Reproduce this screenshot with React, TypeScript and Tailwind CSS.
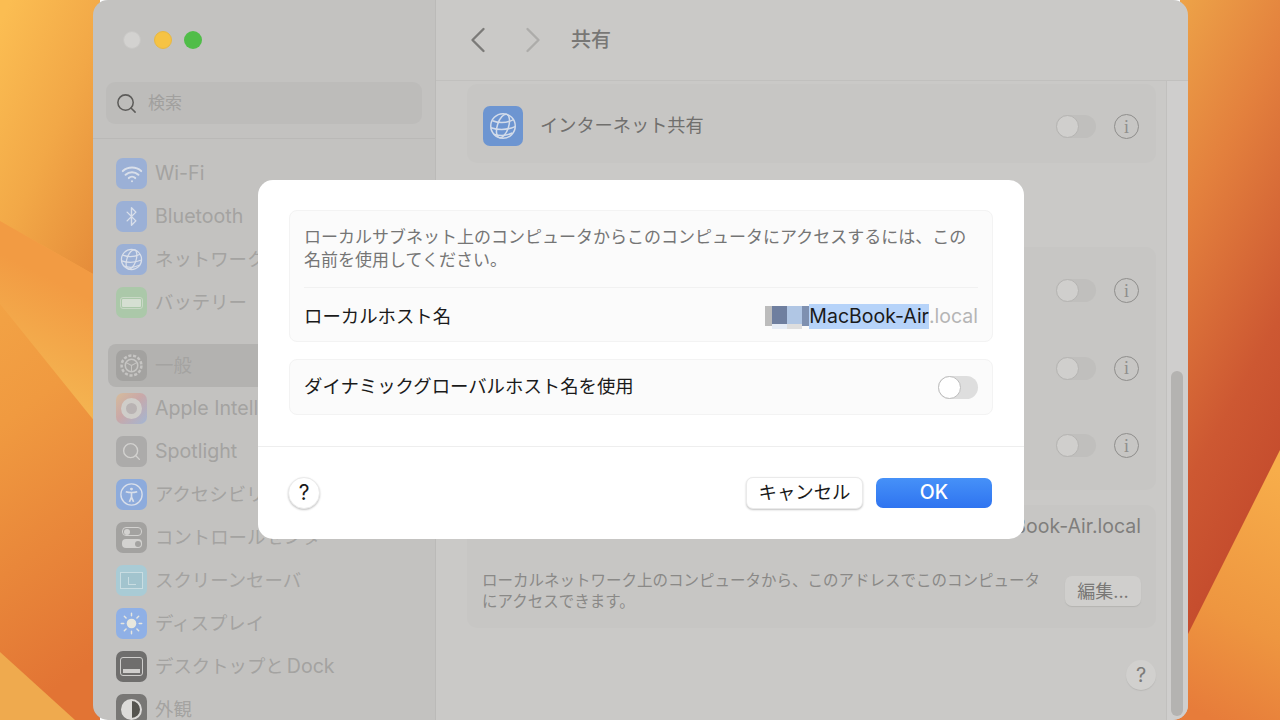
import { Search, Wifi, Bluetooth, ChevronLeft, ChevronRight } from "lucide-react";
import type { ReactNode } from "react";

function Wallpaper() {
  return (
    <svg className="absolute inset-0" width="1280" height="720" viewBox="0 0 1280 720" aria-hidden>
      <defs>
        <linearGradient id="wl" x1="0.1" y1="0" x2="0.9" y2="1">
          <stop offset="0" stopColor="#fbbd52" />
          <stop offset="0.5" stopColor="#f2a847" />
          <stop offset="1" stopColor="#e58c3a" />
        </linearGradient>
        <linearGradient id="below" x1="0" y1="0" x2="0.15" y2="1">
          <stop offset="0" stopColor="#f4a848" />
          <stop offset="0.4" stopColor="#f09a40" />
          <stop offset="1" stopColor="#e27434" />
        </linearGradient>
        <linearGradient id="wedge" gradientUnits="userSpaceOnUse" x1="93" y1="300" x2="45" y2="395">
          <stop offset="0" stopColor="#f29b43" />
          <stop offset="1" stopColor="#f4b451" />
        </linearGradient>
        <linearGradient id="wr" x1="0" y1="0" x2="0.25" y2="1">
          <stop offset="0" stopColor="#eda348" />
          <stop offset="0.3" stopColor="#e3803d" />
          <stop offset="0.65" stopColor="#cd5832" />
          <stop offset="1" stopColor="#bf442a" />
        </linearGradient>
        <linearGradient id="wr2" x1="0.6" y1="0" x2="0.4" y2="1">
          <stop offset="0" stopColor="#f7ad4a" />
          <stop offset="0.6" stopColor="#ee9640" />
          <stop offset="1" stopColor="#e77c3a" />
        </linearGradient>
      </defs>
      <rect width="100" height="280" fill="url(#wl)" />
      <polygon points="0,221 100,278 100,720 0,720" fill="url(#below)" />
      <polygon points="0,221 100,278 100,428 0,304" fill="url(#wedge)" />
      <polygon points="0,652 75,720 0,720" fill="#efaa4e" />
      <rect x="1180" width="100" height="720" fill="url(#wr)" />
      <polygon points="1280,450 1280,720 1170,720 1170,670" fill="url(#wr2)" />
    </svg>
  );
}

function Tile({ bg, children, size = "w-[31px] h-[31px]" }: { bg: string; children?: ReactNode; size?: string }) {
  return (
    <div className={`${size} ${bg} shrink-0 rounded-[7px] flex items-center justify-center`}>{children}</div>
  );
}

function GlobeGlyph({ size, stroke }: { size: number; stroke: string }) {
  return (
    <svg width={size} height={size} viewBox="0 0 24 24" fill="none" stroke={stroke} strokeWidth="1.3">
      <circle cx="12" cy="12" r="10.5" />
      <ellipse cx="12" cy="12" rx="4.8" ry="10.5" transform="rotate(18 12 12)" />
      <path d="M3 7.5c5 2 12 2 18-1M1.6 13.5c6 2 14 2 20.8-1M4 19c5 1.5 11 1.5 16-1" />
    </svg>
  );
}

const navTop = [
  {
    label: <span className="text-[19.6px]">Wi-Fi</span>,
    icon: (
      <Tile bg="bg-[#9bb0d6]">
        <Wifi size={22} color="#d9dfea" strokeWidth={2.2} />
      </Tile>
    ),
  },
  {
    label: <span className="text-[19.6px]">Bluetooth</span>,
    icon: (
      <Tile bg="bg-[#9bb0d6]">
        <Bluetooth size={21} color="#d9dfea" strokeWidth={1.6} />
      </Tile>
    ),
  },
  {
    label: "ネットワーク",
    icon: (
      <Tile bg="bg-[#9bb0d6]">
        <GlobeGlyph size={23} stroke="#d9dfea" />
      </Tile>
    ),
  },
  {
    label: "バッテリー",
    icon: (
      <Tile bg="bg-[#abc8a9]">
        <div className="w-[23px] h-[12px] rounded-[3px] border border-[#c9d8c6] p-[1px]">
          <div className="w-full h-full rounded-[1px] bg-[#d5dfd2]" />
        </div>
      </Tile>
    ),
  },
];

const navBottom = [
  {
    label: "一般",
    active: true,
    icon: (
      <Tile bg="bg-[#a3a2a0]">
        <svg width="25" height="25" viewBox="0 0 24 24" fill="none" stroke="#c6c5c3" strokeWidth="1.5">
          <circle cx="12" cy="12" r="6" />
          <circle cx="12" cy="12" r="9.5" strokeDasharray="3 1.6" strokeWidth="2.4" />
          <path d="M12 12 6.5 9M12 12l5.5-3M12 12v6" strokeWidth="1" />
        </svg>
      </Tile>
    ),
  },
  {
    label: <span className="text-[19.6px]">Apple Intelligence</span>,
    icon: (
      <Tile bg="bg-[linear-gradient(135deg,#d6bc9c,#c9a8a8_45%,#a3b6d3)]">
        <div className="w-[21px] h-[21px] rounded-full border-[5px] border-[#cfcdc9] bg-[#b9b3b3]" />
      </Tile>
    ),
  },
  {
    label: <span className="text-[19.6px]">Spotlight</span>,
    icon: (
      <Tile bg="bg-[#acabaa]">
        <Search size={21} color="#d2d1cf" strokeWidth={1.6} />
      </Tile>
    ),
  },
  {
    label: "アクセシビリティ",
    icon: (
      <Tile bg="bg-[#8dabdc]">
        <svg width="25" height="25" viewBox="0 0 24 24" fill="none" stroke="#d9dfea" strokeWidth="1.3">
          <circle cx="12" cy="12" r="10.2" />
          <circle cx="12" cy="6.8" r="1.4" fill="#d9dfea" stroke="none" />
          <path d="M6.5 9.3c3.5 1 7.5 1 11 0M12 10.5v4M12 14.5l-2 4.5M12 14.5l2 4.5" strokeWidth="1.6" />
        </svg>
      </Tile>
    ),
  },
  {
    label: "コントロールセンター",
    icon: (
      <Tile bg="bg-[#a3a2a0]">
        <div className="flex flex-col gap-[3px]">
          <div className="w-[20px] h-[9px] rounded-[4px] border border-[#d3d2d0] flex items-center p-[1px]">
            <div className="w-[6px] h-[6px] rounded-full bg-[#d3d2d0]" />
          </div>
          <div className="w-[20px] h-[9px] rounded-[4px] bg-[#d3d2d0] flex items-center justify-end p-[1px]">
            <div className="w-[6px] h-[6px] rounded-full bg-[#a3a2a0]" />
          </div>
        </div>
      </Tile>
    ),
  },
  {
    label: "スクリーンセーバ",
    icon: (
      <Tile bg="bg-[#a9cbd5]">
        <div className="w-[23px] h-[17px] border border-[#c9dde2] bg-[#a2c4ce] flex items-center justify-center">
          <div className="w-[8px] h-[8px] border-b border-l border-[#c9dde2]" />
        </div>
      </Tile>
    ),
  },
  {
    label: "ディスプレイ",
    icon: (
      <Tile bg="bg-[#8fb0e6]">
        <svg width="25" height="25" viewBox="0 0 24 24" stroke="#e6e6df" strokeWidth="1.4" strokeLinecap="round">
          <circle cx="12" cy="12" r="4.6" fill="#e9e8de" stroke="none" />
          <path d="M12 2.2v2.4M12 19.4v2.4M2.2 12h2.4M19.4 12h2.4M5.1 5.1l1.7 1.7M17.2 17.2l1.7 1.7M5.1 18.9l1.7-1.7M17.2 6.8l1.7-1.7" />
        </svg>
      </Tile>
    ),
  },
  {
    label: (
      <>
        デスクトップと<span className="ml-[3px] text-[19.6px]">Dock</span>
      </>
    ),
    icon: (
      <Tile bg="bg-[#6f6e6d]">
        <div className="w-[23px] h-[19px] rounded-[3px] border border-[#cfcecc] flex items-end justify-center pb-[2px]">
          <div className="w-[17px] h-[4px] bg-[#cfcecc]" />
        </div>
      </Tile>
    ),
  },
  {
    label: "外観",
    icon: (
      <Tile bg="bg-[#787775]">
        <div className="w-[21px] h-[21px] rounded-full border-2 border-[#dcdbd9] bg-[linear-gradient(90deg,#dcdbd9_50%,#55544f_50%)]" />
      </Tile>
    ),
  },
];

function NavRow({ label, icon, active }: { label: ReactNode; icon: ReactNode; active?: boolean }) {
  return (
    <div
      className={`flex items-center gap-[8px] h-[43px] pl-[8px] mx-[15px] rounded-[8px] whitespace-nowrap ${
        active ? "bg-[#b3b2b0]" : ""
      }`}
    >
      {icon}
      <span className="text-[18.4px] text-[#a4a3a1]">{label}</span>
    </div>
  );
}

function Sidebar() {
  return (
    <aside className="w-[343px] shrink-0 bg-[#c3c2c0] border-r border-[#bbbab8] flex flex-col">
      <div className="flex items-center gap-[12.5px] h-[80px] pl-[30px] shrink-0">
        <div className="w-[18px] h-[18px] rounded-full bg-[#d3d2d0] border border-[#c8c7c5]" />
        <div className="w-[18px] h-[18px] rounded-full bg-[#f6c344] border border-[#e8b842]" />
        <div className="w-[18px] h-[18px] rounded-full bg-[#50bd48]" />
      </div>
      <div className="mx-[13px] h-[42px] mt-[2px] rounded-[9px] bg-[#bdbcba] flex items-center pl-[9px] gap-[10px] shrink-0">
        <Search size={23} color="#5d5c5a" strokeWidth={1.6} />
        <span className="text-[17px] text-[#a1a09e] pt-[2px]">検索</span>
      </div>
      <div className="h-px bg-[#bab9b7] mt-[14px] shrink-0" />
      <div className="pt-[13px]">
        {navTop.map((item, i) => (
          <NavRow key={i} {...item} />
        ))}
      </div>
      <div className="pt-[20px]">
        {navBottom.map((item, i) => (
          <NavRow key={i} {...item} />
        ))}
      </div>
    </aside>
  );
}

function Toggle({ tone = "dim" }: { tone?: "dim" | "bright" }) {
  if (tone === "bright") {
    return (
      <div className="w-[40px] h-[23px] rounded-full bg-[#dedede] shrink-0">
        <div className="w-[23px] h-[23px] rounded-full bg-white border border-[#bdbdbd]" />
      </div>
    );
  }
  return (
    <div className="w-[40px] h-[23px] rounded-full bg-[#c0bfbd] shrink-0">
      <div className="w-[23px] h-[23px] rounded-full bg-[#d0cfcd] border border-[#b5b4b2]" />
    </div>
  );
}

function InfoIcon() {
  return (
    <div className="w-[25px] h-[25px] rounded-full border-[1.5px] border-[#8f8e8c] flex items-center justify-center shrink-0 text-[18px] leading-none text-[#8f8e8c] [font-family:'Liberation_Serif',serif]">
      i
    </div>
  );
}

function SwitchRow() {
  return (
    <div className="h-[77.5px] flex items-center justify-end gap-[18px] pr-[17px]">
      <Toggle />
      <InfoIcon />
    </div>
  );
}

function Content() {
  return (
    <section className="flex-1 min-w-0 flex flex-col bg-[#cac9c7]">
      <header className="h-[81px] shrink-0 border-b border-[#c1c0be] flex items-center pl-[20px]">
        <ChevronLeft size={44} color="#7b7a78" strokeWidth={1.3} />
        <ChevronRight size={44} color="#adacaa" strokeWidth={1.3} className="ml-[11px]" />
        <span className="ml-[16px] text-[20px] font-medium text-[#787775]">共有</span>
      </header>
      <div className="flex-1 flex min-h-0">
        <div className="flex-1 min-w-0 pl-[31px] pr-[10px] pt-[3px] flex flex-col">
          <div className="h-[79px] rounded-[10px] bg-[#c7c6c4] flex items-center pt-[4px] pl-[16px] pr-[17px] shrink-0">
            <Tile bg="bg-[#6d95d1]" size="w-[40px] h-[40px]">
              <GlobeGlyph size={28} stroke="#d3dcea" />
            </Tile>
            <span className="ml-[17px] pt-[1px] text-[18.2px] text-[#706f6d]">インターネット共有</span>
            <div className="ml-auto flex items-center gap-[18px] pt-[2px]">
              <Toggle />
              <InfoIcon />
            </div>
          </div>
          <div className="mt-[84px] h-[243px] rounded-[10px] bg-[#c7c6c4] pt-[5px] shrink-0">
            <SwitchRow />
            <SwitchRow />
            <SwitchRow />
          </div>
          <div className="mt-[15px] h-[123px] rounded-[10px] bg-[#c7c6c4] px-[15px] shrink-0">
            <div className="h-[44px] flex items-center justify-end text-[19.5px] text-[#7f7e7c] whitespace-nowrap">
              MacBook-Air.local
            </div>
            <div className="flex items-center justify-between mt-[21px]">
              <p className="w-[566px] text-[15.5px] leading-[21px] text-[#8a8987]">
                ローカルネットワーク上のコンピュータから、このアドレスでこのコンピュータにアクセスできます。
              </p>
              <div className="w-[76px] h-[30px] rounded-[7px] bg-[#d0cfcd] shadow-[0_1px_1px_#b5b4b2] flex items-center justify-center text-[18px] text-[#797876]">
                編集...
              </div>
            </div>
          </div>
          <div className="flex justify-end mt-[32px]">
            <div className="w-[30px] h-[30px] rounded-full bg-[#d1d0ce] shadow-[0_1px_1px_#b9b8b6] flex items-center justify-center text-[20px] text-[#7c7b79]">
              ?
            </div>
          </div>
        </div>
        <div className="w-[22px] shrink-0 bg-[#cfcecd] border-l border-[#c1c0be] pt-[290px] pb-[4px] pl-[4px] pr-[5px]">
          <div className="h-full rounded-full bg-[#b4b3b1]" />
        </div>
      </div>
    </section>
  );
}

function Dialog() {
  return (
    <div className="absolute left-[258px] top-[180px] w-[766px] h-[359px] rounded-[15px] bg-white flex flex-col">
      <div className="px-[31px] pt-[30px] flex flex-col gap-[17px]">
        <div className="h-[132px] rounded-[8px] bg-[#fbfbfb] border border-[#f3f3f3] px-[14px]">
          <p className="pt-[15px] h-[76px] text-[17px] leading-[23px] text-[#757575]">
            ローカルサブネット上のコンピュータからこのコンピュータにアクセスするには、この名前を使用してください。
          </p>
          <div className="h-px bg-[#f1f1f1]" />
          <div className="h-[54px] pt-[3px] flex items-center justify-between">
            <span className="text-[18.4px] text-[#1a1a1a]">ローカルホスト名</span>
            <span className="flex items-center text-[19.5px] whitespace-nowrap">
              <span className="flex h-[25px]" aria-hidden>
                <span className="w-[7px] h-[20px] mt-[2px] bg-[#bcbcbc]" />
                <span className="w-[15px] flex flex-col pt-[2px]">
                  <span className="h-[18px] bg-[#6f7f9f]" />
                  <span className="h-[5px] bg-[#e6ecf5]" />
                </span>
                <span className="w-[15px] flex flex-col pt-[2px]">
                  <span className="h-[18px] bg-[#b0c6e4]" />
                  <span className="h-[5px] bg-[#dedede]" />
                </span>
                <span className="w-[7px] h-[20px] mt-[2px] bg-[#7e90b0]" />
              </span>
              <span className="h-[25px] leading-[25px] bg-[#b6d3f9] text-[#1a1a1a]">MacBook-Air</span>
              <span className="text-[#b5b5b5]">.local</span>
            </span>
          </div>
        </div>
        <div className="h-[56px] rounded-[8px] bg-[#fbfbfb] border border-[#f3f3f3] px-[14px] flex items-center justify-between">
          <span className="text-[18.4px] text-[#1a1a1a] -mt-[1px]">ダイナミックグローバルホスト名を使用</span>
          <Toggle tone="bright" />
        </div>
      </div>
      <div className="h-px bg-[#eeeeee] mt-[31px]" />
      <div className="flex-1 flex items-center pl-[30px] pr-[31px]">
        <div className="w-[32px] h-[32px] rounded-full bg-white border border-[#eaeaea] shadow-[0_1px_2px_#c4c4c4] flex items-center justify-center text-[21px] text-[#1a1a1a]">
          ?
        </div>
        <div className="ml-auto flex items-center gap-[13px]">
          <div className="w-[117px] h-[32px] rounded-[7px] bg-white border border-[#eaeaea] shadow-[0_1px_2px_#c4c4c4] flex items-center justify-center text-[18.4px] text-[#1a1a1a]">
            キャンセル
          </div>
          <div className="w-[116px] h-[30px] mr-px rounded-[7px] bg-[linear-gradient(180deg,#4691f8,#2f74f0)] flex items-center justify-center text-[19.5px] font-medium text-white">
            OK
          </div>
        </div>
      </div>
    </div>
  );
}

export default function App() {
  return (
    <div className="relative w-[1280px] h-[720px] overflow-hidden [font-family:Inter,'Noto_Sans_CJK_JP',sans-serif]">
      <Wallpaper />
      <div className="relative ml-[93px] w-[1095px] h-[720px] rounded-[15px] overflow-hidden flex">
        <Sidebar />
        <Content />
      </div>
      <Dialog />
    </div>
  );
}
